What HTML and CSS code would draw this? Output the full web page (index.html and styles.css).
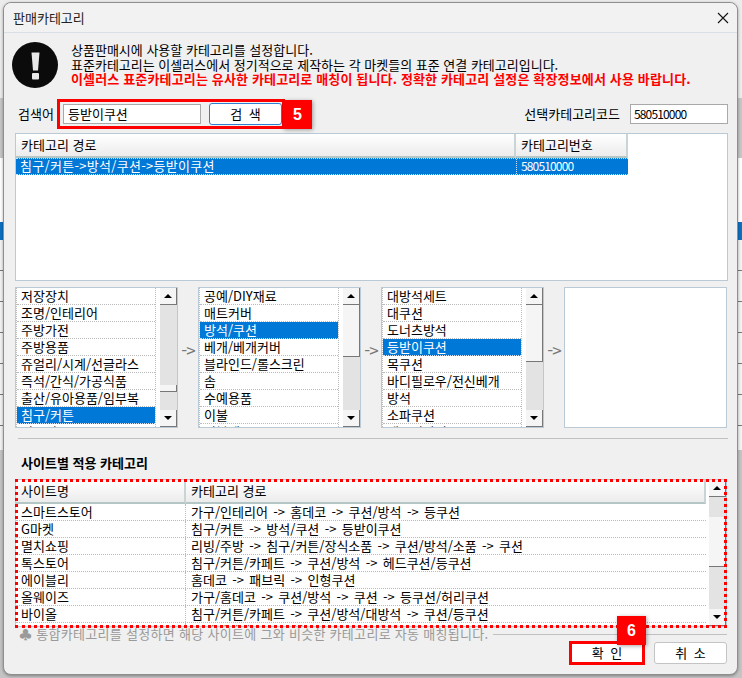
FILE: index.html
```html
<!DOCTYPE html>
<html lang="ko">
<head>
<meta charset="utf-8">
<title>판매카테고리</title>
<link rel="stylesheet" href="styles.css">
</head>
<body>
<div class="dialog">
  <header class="titlebar">
    <span class="title">판매카테고리</span>
    <svg class="close" viewBox="0 0 12 12" width="12" height="12"><path d="M1 1L11 11M11 1L1 11" stroke="#111" stroke-width="1.1" fill="none"/></svg>
  </header>
  <main class="content">
    <section class="intro">
      <svg class="alert" viewBox="0 0 46 46" width="46" height="46"><circle cx="23" cy="23" r="23" fill="#0b0b0b"/><path d="M19.5 10.5h8l-1.5 18h-5z" fill="#e8e8e8"/><rect x="20" y="31" width="7" height="6.5" rx="1" fill="#e8e8e8"/></svg>
      <div class="intro-text">
        <p>상품판매시에 사용할 카테고리를 설정합니다.</p>
        <p>표준카테고리는 이셀러스에서 정기적으로 제작하는 각 마켓들의 표준 연결 카테고리입니다.</p>
        <p class="warn">이셀러스 표준카테고리는 유사한 카테고리로 매칭이 됩니다. 정확한 카테고리 설정은 확장정보에서 사용 바랍니다.</p>
      </div>
    </section>

    <section class="search">
      <span class="search-label">검색어</span>
      <div class="search-box">
        <div class="field field-term">등받이쿠션</div>
        <div class="btn btn-search">검 색</div>
        <span class="badge badge-5">5</span>
      </div>
      <span class="code-label">선택카테고리코드</span>
      <div class="field field-code digits">580510000</div>
    </section>

    <section class="result">
      <div class="head">
        <div class="hcell c-path">카테고리 경로</div>
        <div class="hcell c-num">카테고리번호</div>
      </div>
      <div class="rrow">
        <div class="c-path">침구/커튼-&gt;방석/쿠션-&gt;등받이쿠션</div>
        <div class="c-num digits">580510000</div>
      </div>
    </section>

    <section class="pickers">
      <div class="picker">
        <ul class="items">
          <li>저장장치</li><li>조명/인테리어</li><li>주방가전</li><li>주방용품</li><li>쥬얼리/시계/선글라스</li><li>즉석/간식/가공식품</li><li>출산/유아용품/임부복</li><li class="on">침구/커튼</li><li>컴퓨터</li>
        </ul>
        <div class="sbar">
          <div class="sbtn"><i class="up"></i></div>
          <div class="track"><div class="thumb thumb-a"></div></div>
          <div class="sbtn"><i class="down"></i></div>
        </div>
      </div>
      <div class="arrow">-&gt;</div>
      <div class="picker">
        <ul class="items">
          <li>공예/DIY재료</li><li>매트커버</li><li class="on">방석/쿠션</li><li>베개/베개커버</li><li>블라인드/롤스크린</li><li>솜</li><li>수예용품</li><li>이불</li><li>이불세트</li>
        </ul>
        <div class="sbar">
          <div class="sbtn"><i class="up"></i></div>
          <div class="track"><div class="thumb thumb-b"></div></div>
          <div class="sbtn"><i class="down"></i></div>
        </div>
      </div>
      <div class="arrow">-&gt;</div>
      <div class="picker">
        <ul class="items">
          <li>대방석세트</li><li>대쿠션</li><li>도너츠방석</li><li class="on">등받이쿠션</li><li>목쿠션</li><li>바디필로우/전신베개</li><li>방석</li><li>소파쿠션</li><li>패브릭방석</li>
        </ul>
        <div class="sbar">
          <div class="sbtn"><i class="up"></i></div>
          <div class="track"><div class="thumb thumb-c"></div></div>
          <div class="sbtn"><i class="down"></i></div>
        </div>
      </div>
      <div class="arrow">-&gt;</div>
      <div class="picker picker-empty"></div>
    </section>

    <hr class="divider">
    <h2 class="site-title">사이트별 적용 카테고리</h2>

    <section class="sites">
      <div class="sites-main">
        <div class="head head-sites">
          <div class="hcell c-site">사이트명</div>
          <div class="hcell c-route">카테고리 경로</div>
        </div>
        <div class="srow"><div class="c-site">스마트스토어</div><div class="c-route">가구/인테리어 -&gt; 홈데코 -&gt; 쿠션/방석 -&gt; 등쿠션</div></div>
        <div class="srow"><div class="c-site">G마켓</div><div class="c-route">침구/커튼 -&gt; 방석/쿠션 -&gt; 등받이쿠션</div></div>
        <div class="srow"><div class="c-site">멸치쇼핑</div><div class="c-route">리빙/주방 -&gt; 침구/커튼/장식소품 -&gt; 쿠션/방석/소품 -&gt; 쿠션</div></div>
        <div class="srow"><div class="c-site">톡스토어</div><div class="c-route">침구/커튼/카페트 -&gt; 쿠션/방석 -&gt; 헤드쿠션/등쿠션</div></div>
        <div class="srow"><div class="c-site">에이블리</div><div class="c-route">홈데코 -&gt; 패브릭 -&gt; 인형쿠션</div></div>
        <div class="srow"><div class="c-site">올웨이즈</div><div class="c-route">가구/홈데코 -&gt; 쿠션/방석 -&gt; 쿠션 -&gt; 등쿠션/허리쿠션</div></div>
        <div class="srow"><div class="c-site">바이올</div><div class="c-route">침구/커튼/카페트 -&gt; 쿠션/방석/대방석 -&gt; 쿠션/등쿠션</div></div>
        <div class="srow"><div class="c-site">쿠팡</div><div class="c-route">홈인테리어 -&gt; 쿠션/방석 -&gt; 등쿠션</div></div>
      </div>
      <div class="sbar">
        <div class="sbtn"><i class="up"></i></div>
        <div class="track"><div class="thumb thumb-d"></div></div>
        <div class="sbtn"><i class="down"></i></div>
      </div>
    </section>

    <div class="note">
      <span class="note-text">♣ 통합카테고리를 설정하면 해당 사이트에 그와 비슷한 카테고리로 자동 매칭됩니다.</span>
      <span class="note-line"></span>
    </div>

    <footer class="actions">
      <div class="ok-box">
        <span class="badge badge-6">6</span>
        <div class="btn btn-ok">확 인</div>
      </div>
      <div class="btn btn-cancel">취 소</div>
    </footer>
  </main>
</div>
</body>
</html>
```

FILE: styles.css
```css
* { box-sizing: border-box; }
html, body { margin: 0; padding: 0; }
body {
  width: 742px;
  height: 678px;
  overflow: hidden;
  padding: 2px 4px 3px 3px;
  font-family: "Noto Sans CJK KR", "Noto Sans", sans-serif;
  font-size: 13px;
  line-height: 16px;
  color: #000;
  background:
    repeating-linear-gradient(to bottom, transparent 0, transparent 30px, #777 30px, #777 31px) 0 240px / 100% 210px no-repeat,
    linear-gradient(to bottom, #ececec 0, #ececec 98px, #c6c6c6 98px, #c6c6c6 158px, #fff 158px, #fff 222px, #0d6fc0 222px, #0d6fc0 240px, #f2f2f2 240px, #f2f2f2 450px, #c4c4c4 450px);
}
.dialog {
  height: 673px;
  background: #f0f0f0;
  border: 1px solid #8f8f8f;
  border-radius: 8px;
  box-shadow: 0 1px 3px rgba(0,0,0,.35);
  display: flex;
  flex-direction: column;
}
.titlebar {
  flex: none;
  height: 30px;
  border-bottom: 1px solid #d8dfe6;
  display: flex;
  align-items: center;
  justify-content: space-between;
  padding: 0 8px 0 9px;
  background: #f2f2f2;
  border-radius: 8px 8px 0 0;
}
.title { color: #222; }
.close { display: block; }
.content {
  flex: 1;
  padding: 0 9px 0 11px;
  display: flex;
  flex-direction: column;
}

/* intro */
.intro { display: flex; height: 66px; padding-top: 9px; }
.alert { margin: 0 13px 0 -3px; flex: none; }
.intro-text { padding-top: 1px; }
.intro-text p { margin: 0; height: 14.5px; line-height: 14.5px; white-space: nowrap; }
.intro-text .warn { color: #f00; font-weight: 700; letter-spacing: .15px; }

/* search */
.search { display: flex; align-items: center; height: 30px; }
.search-label { margin-left: 3px; width: 39px; }
.search-box {
  position: relative;
  display: flex;
  align-items: center;
  width: 228px;
  height: 30px;
  padding-left: 3px;
  border: 3px solid #f00;
}
.field {
  height: 20px;
  line-height: 17px;
  padding-left: 3px;
  background: #fff;
  border: 1px solid #a9a9a9;
}
.field-term { width: 138px; padding-left: 4px; }
.field-code { width: 98px; margin-left: 10px; }
.code-label { margin-left: auto; }
.digits { font-size: 12px; letter-spacing: -.85px; }
.btn {
  display: flex;
  align-items: center;
  justify-content: center;
  background: #fff;
  border: 1px solid #c4c4c4;
  border-radius: 3px;
  word-spacing: 3px;
}
.btn-search { width: 73px; height: 22px; margin-left: 8px; border-color: #2f7fd0; }
.badge {
  position: absolute;
  width: 29px;
  height: 29px;
  background: #f00;
  color: #fff;
  font: 700 16px/29px "Liberation Sans", sans-serif;
  text-align: center;
  box-shadow: 1px 1px 4px rgba(0,0,0,.35);
}
.badge-5 { left: 223px; top: -2px; }
.badge-6 { left: 45px; top: -28px; z-index: 2; }

/* result table */
.result {
  height: 148px;
  margin-top: 4px;
  background: #fff;
  border: 1px solid #b9c9d6;
}
.head { display: flex; height: 24px; }
.hcell {
  height: 24px;
  line-height: 21px;
  padding-left: 5px;
  background: linear-gradient(to bottom, #fff, #ececec);
  border-right: 2px solid #c9d4d4;
  border-bottom: 2px solid #b4c6c6;
}
.rrow {
  display: flex;
  width: 612px;
  height: 17px;
  line-height: 13px;
  color: #fff;
  background: #0078d7;
  border-top: 1px dotted #cfe3f5;
  border-bottom: 1px dotted #cfe3f5;
}
.rrow div { padding-left: 4px; }
.rrow .c-path { letter-spacing: .3px; }
.c-path { width: 500px; }
.c-num { width: 112px; }
.rrow .c-num { border-left: 1px dotted #cfe3f5; }

/* pickers */
.pickers { display: flex; height: 141px; margin-top: 6px; }
.picker {
  display: flex;
  justify-content: space-between;
  width: 163px;
  height: 141px;
  background: #fff;
  border: 1px solid #b9c9d6;
  overflow: hidden;
}
.picker-empty { display: block; }
.items {
  list-style: none;
  margin: 0;
  padding: 0;
  width: 140px;
  height: 139px;
  overflow: hidden;
  border-right: 1px dotted #bbb;
  border-left: 1px dotted #bbb;
}
.items li {
  height: 17px;
  line-height: 15px;
  padding-left: 4px;
  border-bottom: 1px dotted #bbb;
  white-space: nowrap;
}
.items li.on { color: #fff; background: #0078d7; border-bottom-color: #cfe3f5; }
.arrow {
  width: 20px;
  text-align: center;
  color: #777;
  line-height: 126px;
  font-size: 17px;
  letter-spacing: -1px;
}
.sbar {
  flex: none;
  width: 17px;
  display: flex;
  flex-direction: column;
  background: #e3e3e3;
}
.sbtn {
  flex: none;
  height: 17px;
  display: flex;
  align-items: center;
  justify-content: center;
  background: #f5f5f5;
  border-right: 1px solid #777;
  border-bottom: 1px solid #777;
}
.up, .down { width: 0; height: 0; border-left: 4px solid transparent; border-right: 4px solid transparent; }
.up { border-bottom: 4px solid #000; }
.down { border-top: 4px solid #000; }
.track { flex: 1; }
.thumb { background: #f5f5f5; border-right: 1px solid #777; border-bottom: 1px solid #777; }
.thumb-a { margin-top: 80px; height: 7px; }
.thumb-b { margin-top: 0; height: 52px; }
.thumb-c { margin-top: 0; height: 57px; }
.thumb-d { margin-top: 20px; height: 50px; }

/* sites */
.divider { width: 710px; margin: 10px 0 0 3px; height: 1px; border: 0; background: #c0c0c0; }
.site-title { margin: 16px 0 0 6px; font-size: 13px; line-height: 16px; font-weight: 700; }
.sites {
  position: relative;
  display: flex;
  justify-content: space-between;
  width: 712px;
  height: 148px;
  margin-top: 8px;
  background: #fff;
  border: 1px solid #b9c9d6;
}
.sites::after {
  content: "";
  position: absolute;
  inset: -1px -1px -2px -1px;
  border: 3px dotted #f00;
  pointer-events: none;
}
.sites-main { width: 690px; overflow: hidden; height: 146px; }
.head-sites { width: 690px; }
.c-site { flex: none; width: 170px; padding-left: 5px; }
.c-route { flex: 1; padding-left: 5px; white-space: nowrap; }
.srow .c-route { word-spacing: 1.7px; }
.srow {
  display: flex;
  height: 17px;
  line-height: 15px;
  border-bottom: 1px dotted #bbb;
}
.srow .c-site { border-right: 1px dotted #bbb; }

/* footer */
.note {
  display: flex;
  align-items: center;
  height: 14px;
  margin-left: 4px;
  margin-right: 1px;
  color: #9a9a9a;
}
.note-text { white-space: nowrap; letter-spacing: .3px; }
.note-line { flex: 1; height: 1px; margin-left: 4px; background: #c0c0c0; }
.actions {
  display: flex;
  justify-content: flex-end;
  align-items: center;
  gap: 9px;
  height: 24px;
  margin-right: 1px;
}
.ok-box { position: relative; width: 76px; height: 24px; border: 3px solid #f00; }
.btn-ok { width: 100%; height: 100%; border: 0; border-radius: 0; }
.btn-cancel { width: 73px; height: 22px; }
```
